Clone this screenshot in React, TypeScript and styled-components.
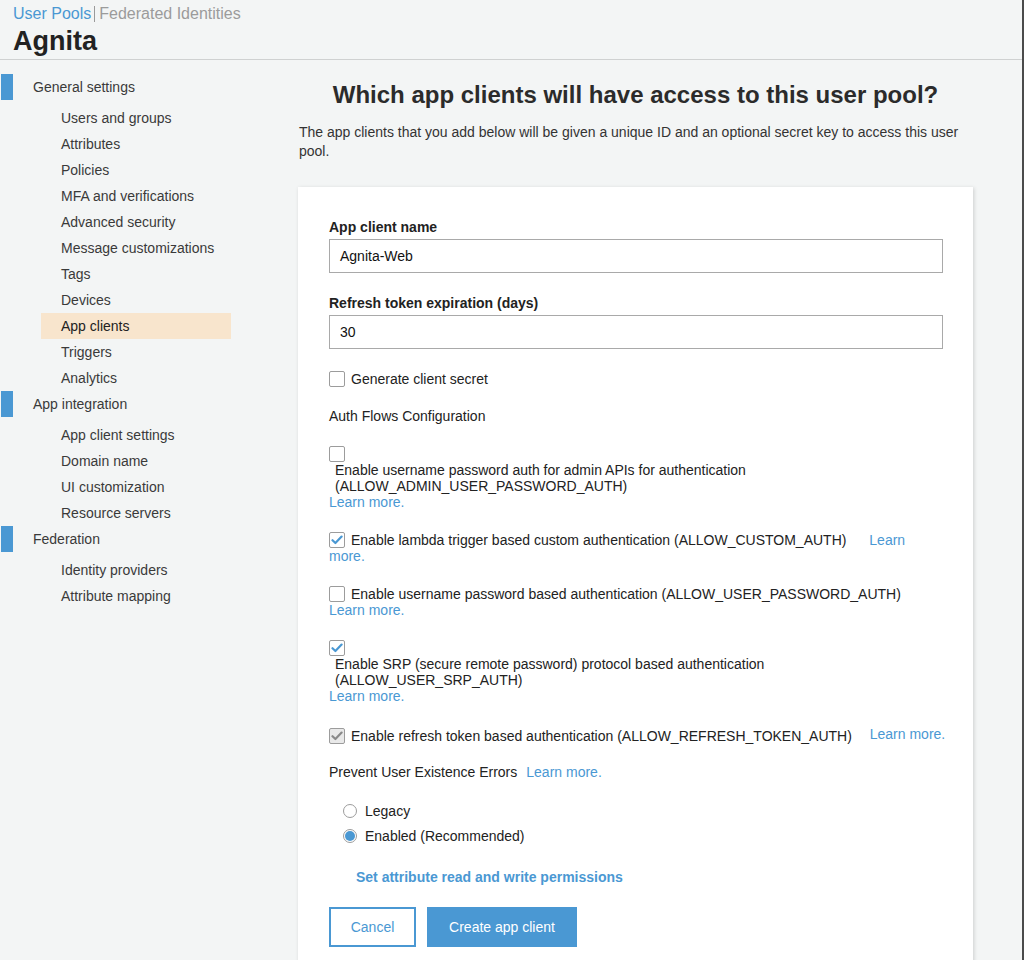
import React from "react";
import styled, { createGlobalStyle, css } from "styled-components";

const BLUE = "#4a98d3";
const TEXT = "#333333";

const Global = createGlobalStyle`
  html, body { margin: 0; padding: 0; background: #f3f5f5; }
  body { font-family: "Liberation Sans", Arial, Helvetica, sans-serif; color: ${TEXT}; }
  * { box-sizing: border-box; }
`;

const Shell = styled.div`
  width: 1024px;
  min-height: 960px;
  border-right: 2px solid #4b4b4b;
  background: #f3f5f5;
  overflow: hidden;
`;

const Header = styled.header`
  height: 60px;
  border-bottom: 1px solid #cfd1d1;
  padding: 4px 0 0 13px;
`;

const Crumbs = styled.div`
  display: flex;
  align-items: center;
  font-size: 16px;
  line-height: 20px;
`;

const CrumbActive = styled.span`
  color: ${BLUE};
`;

const CrumbSep = styled.span`
  width: 1px;
  height: 16px;
  background: #9a9a9a;
  margin: 0 4px 0 3px;
`;

const CrumbOther = styled.span`
  color: #9b9b9b;
`;

const PoolName = styled.h1`
  margin: 1px 0 0;
  font-size: 27px;
  line-height: 32px;
  font-weight: bold;
  color: #222;
`;

const Body = styled.div`
  display: flex;
  align-items: flex-start;
`;

const Sidebar = styled.nav`
  width: 250px;
  flex: none;
  padding-top: 14px;
`;

const Section = styled.div`
  display: flex;
  align-items: center;
  height: 26px;
  margin-bottom: 5px;
  font-size: 14px;
  color: #3a3a3a;
`;

const SectionBar = styled.span`
  width: 12px;
  height: 26px;
  margin-left: 1px;
  margin-right: 20px;
  background: ${BLUE};
`;

const NavItem = styled.div<{ $active?: boolean }>`
  height: 26px;
  line-height: 26px;
  width: 190px;
  margin-left: 41px;
  padding-left: 20px;
  font-size: 14px;
  color: #3a3a3a;
  ${(p) =>
    p.$active &&
    css`
      background: #f8e5cd;
      color: #222;
    `}
`;

const Main = styled.main`
  width: 675px;
  margin-left: 48px;
  padding-top: 21px;
`;

const Title = styled.h2`
  margin: 0;
  text-align: center;
  font-size: 24px;
  line-height: 28px;
  font-weight: bold;
  color: #2b2b2b;
`;

const Intro = styled.p`
  margin: 14px 0 0 1px;
  font-size: 14px;
  line-height: 19px;
  color: #333;
`;

const Card = styled.section`
  margin-top: 26px;
  background: #fff;
  box-shadow: 1px 1px 4px rgba(0, 0, 0, 0.16);
  padding: 32px 30px 40px 31px;
  font-size: 14px;
  line-height: 16px;
`;

const FieldLabel = styled.div<{ $gap?: number }>`
  font-weight: bold;
  color: #222;
  margin-top: ${(p) => p.$gap ?? 0}px;
`;

const TextInput = styled.div`
  margin-top: 4px;
  height: 34px;
  border: 1px solid #a9a9a9;
  padding-left: 10px;
  display: flex;
  align-items: center;
  color: #111;
`;

const Row = styled.div<{ $gap: number }>`
  margin-top: ${(p) => p.$gap}px;
  display: flex;
  align-items: center;
`;

const Option = styled.div<{ $gap: number; $nowrap?: boolean }>`
  margin-top: ${(p) => p.$gap}px;
  line-height: 16px;
  white-space: ${(p) => (p.$nowrap ? "nowrap" : "normal")};
`;

const BoxEl = styled.span<{ $disabled?: boolean }>`
  display: inline-flex;
  align-items: center;
  justify-content: center;
  width: 16px;
  height: 16px;
  vertical-align: top;
  border: 1px solid #9c9c9c;
  border-radius: 2px;
  background: ${(p) => (p.$disabled ? "#e9e9e9" : "#fff")};
`;

const OptText = styled.span<{ $pr?: number }>`
  display: inline-block;
  padding: 0 ${(p) => p.$pr ?? 19}px 0 6px;
  vertical-align: top;
  color: #222;
`;

const Learn = styled.a<{ $up?: number }>`
  color: ${BLUE};
  text-decoration: none;
  position: relative;
  top: ${(p) => -(p.$up ?? 0)}px;
`;

const Plain = styled.div<{ $gap: number }>`
  margin-top: ${(p) => p.$gap}px;
  color: #222;
`;

const InlineLearn = styled(Learn)`
  margin-left: 9px;
`;

const Radios = styled.div`
  margin-top: 23px;
  padding-left: 14px;
  display: flex;
  flex-direction: column;
  gap: 9px;
`;

const RadioRow = styled.div`
  display: flex;
  align-items: center;
  color: #222;
`;

const RadioDot = styled.span<{ $on?: boolean }>`
  width: 14px;
  height: 14px;
  border-radius: 50%;
  border: 1px solid #9c9c9c;
  background: #fff;
  margin-right: 8px;
  display: inline-flex;
  align-items: center;
  justify-content: center;
  &::after {
    content: "";
    width: 10px;
    height: 10px;
    border-radius: 50%;
    background: ${(p) => (p.$on ? BLUE : "transparent")};
  }
`;

const Permissions = styled.a`
  display: block;
  margin: 25px 0 0 27px;
  font-weight: bold;
  color: ${BLUE};
  text-decoration: none;
`;

const Buttons = styled.div`
  display: flex;
  gap: 11px;
  margin-top: 22px;
`;

const Button = styled.button<{ $primary?: boolean }>`
  height: 40px;
  font-family: inherit;
  font-size: 14px;
  border: 2px solid ${BLUE};
  background: ${(p) => (p.$primary ? BLUE : "#fff")};
  color: ${(p) => (p.$primary ? "#fff" : BLUE)};
  width: ${(p) => (p.$primary ? "150px" : "87px")};
  padding: 0;
`;

const Check = ({ color }: { color: string }) => (
  <svg width="12" height="10" viewBox="0 0 12 10">
    <path d="M1.5 5.2 L4.4 8 L10.6 1.6" fill="none" stroke={color} strokeWidth="2.2" strokeLinecap="round" strokeLinejoin="round" />
  </svg>
);

const Box = ({ checked, disabled }: { checked?: boolean; disabled?: boolean }) => (
  <BoxEl $disabled={disabled}>{checked && <Check color={disabled ? "#8a8a8a" : BLUE} />}</BoxEl>
);

const nav: { title: string; items: string[] }[] = [
  {
    title: "General settings",
    items: [
      "Users and groups",
      "Attributes",
      "Policies",
      "MFA and verifications",
      "Advanced security",
      "Message customizations",
      "Tags",
      "Devices",
      "App clients",
      "Triggers",
      "Analytics",
    ],
  },
  { title: "App integration", items: ["App client settings", "Domain name", "UI customization", "Resource servers"] },
  { title: "Federation", items: ["Identity providers", "Attribute mapping"] },
];

const flows: {
  text: string;
  checked?: boolean;
  disabled?: boolean;
  gap: number;
  up?: number;
  nowrap?: boolean;
  pr?: number;
}[] = [
  { text: "Enable username password auth for admin APIs for authentication (ALLOW_ADMIN_USER_PASSWORD_AUTH)", gap: 22 },
  { text: "Enable lambda trigger based custom authentication (ALLOW_CUSTOM_AUTH)", checked: true, gap: 22 },
  { text: "Enable username password based authentication (ALLOW_USER_PASSWORD_AUTH)", gap: 22 },
  { text: "Enable SRP (secure remote password) protocol based authentication (ALLOW_USER_SRP_AUTH)", checked: true, gap: 22 },
  {
    text: "Enable refresh token based authentication (ALLOW_REFRESH_TOKEN_AUTH)",
    checked: true,
    disabled: true,
    gap: 24,
    up: 2,
    nowrap: true,
    pr: 14,
  },
];

export default function App() {
  return (
    <>
      <Global />
      <Shell>
        <Header>
          <Crumbs>
            <CrumbActive>User Pools</CrumbActive>
            <CrumbSep />
            <CrumbOther>Federated Identities</CrumbOther>
          </Crumbs>
          <PoolName>Agnita</PoolName>
        </Header>
        <Body>
          <Sidebar>
            {nav.map((s) => (
              <div key={s.title}>
                <Section>
                  <SectionBar />
                  {s.title}
                </Section>
                {s.items.map((i) => (
                  <NavItem key={i} $active={i === "App clients"}>
                    {i}
                  </NavItem>
                ))}
              </div>
            ))}
          </Sidebar>
          <Main>
            <Title>Which app clients will have access to this user pool?</Title>
            <Intro>
              The app clients that you add below will be given a unique ID and an optional secret key to access this user pool.
            </Intro>
            <Card>
              <FieldLabel>App client name</FieldLabel>
              <TextInput>Agnita-Web</TextInput>
              <FieldLabel $gap={22}>Refresh token expiration (days)</FieldLabel>
              <TextInput>30</TextInput>
              <Row $gap={22}>
                <Box />
                <OptText>Generate client secret</OptText>
              </Row>
              <Plain $gap={21}>Auth Flows Configuration</Plain>
              {flows.map((f) => (
                <Option key={f.text} $gap={f.gap} $nowrap={f.nowrap}>
                  <Box checked={f.checked} disabled={f.disabled} /><OptText $pr={f.pr}>{f.text}</OptText>{" "}
                  <Learn href="#" $up={f.up}>
                    Learn more.
                  </Learn>
                </Option>
              ))}
              <Plain $gap={20}>
                Prevent User Existence Errors<InlineLearn href="#">Learn more.</InlineLearn>
              </Plain>
              <Radios>
                <RadioRow>
                  <RadioDot />
                  Legacy
                </RadioRow>
                <RadioRow>
                  <RadioDot $on />
                  Enabled (Recommended)
                </RadioRow>
              </Radios>
              <Permissions href="#">Set attribute read and write permissions</Permissions>
              <Buttons>
                <Button>Cancel</Button>
                <Button $primary>Create app client</Button>
              </Buttons>
            </Card>
          </Main>
        </Body>
      </Shell>
    </>
  );
}
